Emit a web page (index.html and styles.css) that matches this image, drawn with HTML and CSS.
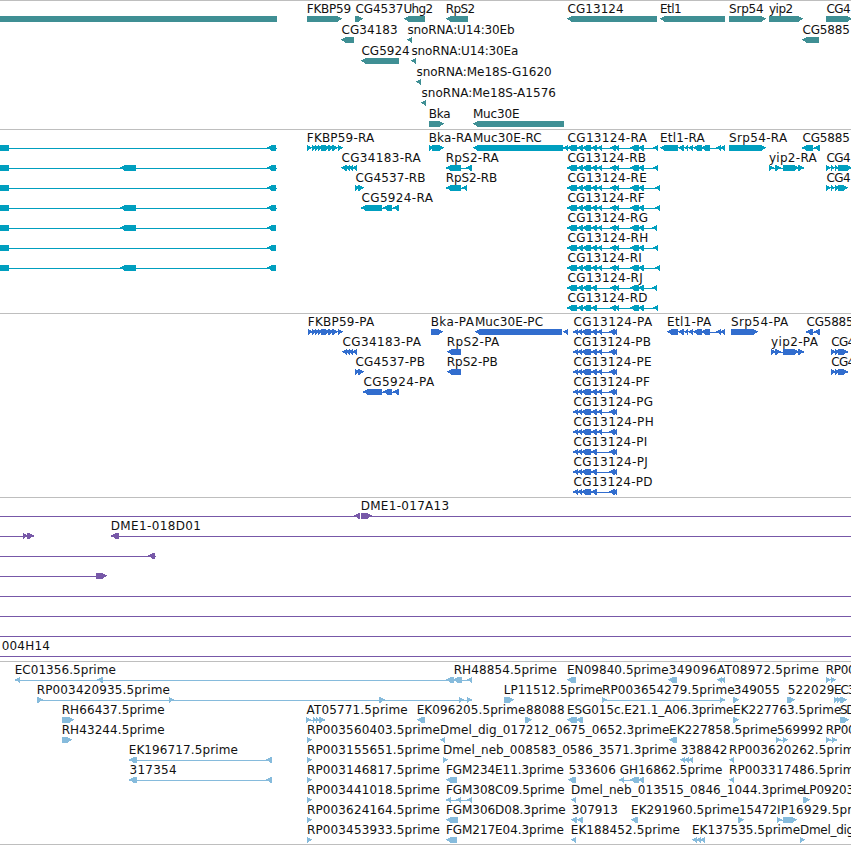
FILE: index.html
```html
<!DOCTYPE html>
<html lang="en">
<head>
<meta charset="utf-8">
<title>Genome map</title>
<link rel="stylesheet" href="styles.css">
</head>
<body>
<main class="map" id="map"></main>
<script src="map.js"></script>
</body>
</html>
```
FILE: styles.css
```css
body {
  margin: 0;
  background: #fff;
  overflow: hidden;
}

.map {
  display: flex;
  flex-direction: column;
  border-bottom: 1px solid #bebebe;
}

.track {
  box-sizing: border-box;
  border-top: 1px solid #bebebe;
  overflow: hidden;
}

.track svg {
  display: block;
}

.label {
  font: 12px "DejaVu Sans", sans-serif;
  fill: #111;
  white-space: pre;
}

.glyph {
  shape-rendering: crispEdges;
}

.genes { height: 129px; fill: #3f8f94; }
.transcripts { height: 184px; fill: #009fbf; }
.proteins { height: 184px; fill: #316dce; }
.clones { height: 164px; fill: #7758a8; }
.ests { height: 183px; fill: #86bbdc; }
```
FILE: map.js
```js
// Each row is [glyphs, labels].
// Glyphs: "<a-b" reverse arrow, ">a-b" forward arrow, "=a-b" box, "_a-b" connecting line.
// Labels: "text|left|right", separated by ";".

const est = id => `RP00${id}.5prime|308|439.5`;

const exonsR = '<567-577 <577-583 <582-591 <591-597';
const tailR = '<610-616 <614-619 <630-639 <638-644';
const rna = (end, single) =>
  `_567-${end} ${exonsR} ${single ? '' : '<597-602'} ${tailR} <${end - 5}-${end}`;
const cds = single =>
  `_573-617 <573-578 <577-582 <581-591 <591-597 ${single ? '' : '<597-602'} <609-615 <612-617`;
const left = (end, mid) => `=0-9 _9-${end} <267-276 ${mid ? '<120-136' : ''}`;
const etl = '<678-684 <684-688 <688-693 <693-702 <701-710 _702-725 <716-721 <720-725';

const tracks = [
  { name: 'genes', pitch: 21, height: 128, rows: [
    ['=0-277 >307-342 >355-363 <404-425 <446-468 <567-657 <660-725 >729-766 >769-803 >826-852',
     'FKBP59|307.8|350.5;CG4537|355.5|402.7;Uhg2|404.5|432.5;RpS2|446.7|474.5;CG13124|567.5|623;Etl1|661|681;Srp54|729|763;yip2|769|792.5;CG4|826.5|850'],
    ['<341-354 <407-412 <802-819', 'CG34183|341.5|397;snoRNA:U14:30Eb|407.5|514;CG5885|802.5|849.3'],
    ['<361-399 <411-416', 'CG5924|361.5|409;snoRNA:U14:30Ea|411.5|518'],
    ['<416-421', 'snoRNA:Me18S-G1620|416.5|551'],
    ['<421-426', 'snoRNA:Me18S-A1576|421.5|555.3'],
    ['>429-444 <473-564', 'Bka|429.7|450.3;Muc30E|473.9|519']
  ]},
  { name: 'transcripts', pitch: 20, height: 183, rows: [
    [`${left(277)} >307-312 >312-317 >315-320 >318-323 >321-330 >328-334 >332-338 >338-343 >429-434 >432-444 <473-563 _563-568 <563-568 ${rna(658)} <660-678 ${etl} >729-766 _802-820 <802-813 <814-820`,
     'FKBP59-RA|307.8|375;Bka-RA|429.7|473;Muc30E-RC|473.9|541.3;CG13124-RA|567.5|647.7;Etl1-RA|661|705.5;Srp54-RA|729|788;CG5885|802.5|849.3'],
    [`${left(277, 1)} <341-347 <345-350 <348-353 <352-357 _446-472 <446-461 <466-472 ${rna(658)} _769-804 >769-774 >775-781 >783-799 >798-804 >826-831 >831-835 >835-839 >838-852`,
     'CG34183-RA|341.5|421.5;RpS2-RA|446.7|499.5;CG13124-RB|567.5|645.7;yip2-RA|769|817.5;CG4|826.5|850'],
    [`${left(277)} >355-360 >358-364 _446-467 <446-461 <462-467 ${rna(660)} >826-831 >831-835 >835-840 >838-848`,
     'CG4537-RB|355.5|425.3;RpS2-RB|446.7|497;CG13124-RE|567.5|646.3;CG4|826.5|850'],
    [`${left(277, 1)} _361-399 <361-382 <383-392 <393-399 ${rna(660)}`, 'CG5924-RA|361.5|433.7;CG13124-RF|567.5|644.7'],
    [`${left(276, 1)} ${rna(657)}`, 'CG13124-RG|567.5|647.7'],
    [`${left(276)} ${rna(658)}`, 'CG13124-RH|567.5|647.3'],
    [`${left(276, 1)} ${rna(660)}`, 'CG13124-RI|567.5|641.3'],
    [rna(657, 1), 'CG13124-RJ|567.5|642.3'],
    [rna(658, 1), 'CG13124-RD|567.5|647.3']
  ]},
  { name: 'proteins', pitch: 20, height: 183, rows: [
    [`>308-313 >312-317 >315-320 >318-323 >321-330 >328-334 >332-338 >338-343 >431-443 <475-562 <563-568 ${cds()} <667-678 ${etl} >731-758 _806-820 <806-813 <814-820`,
     'FKBP59-PA|308.8|374.9;Bka-PA|431.7|474.7;Muc30E-PC|475.9|542.7;CG13124-PA|573.5|653;Etl1-PA|668|712;Srp54-PA|731|789;CG5885|806.5|853'],
    [`<342-347 <345-350 <348-353 <352-357 <447-461 ${cds()} _771-804 >771-776 >775-781 >783-799 >798-804 _831-848 >831-836 >835-840 >838-848`,
     'CG34183-PA|342.5|421.7;RpS2-PA|447.7|500;CG13124-PB|573.5|650.7;yip2-PA|771|818.7;CG4|831.3|854.6'],
    [`>355-360 >358-364 <447-461 ${cds()} _831-848 >831-836 >835-840 >838-848`,
     'CG4537-PB|355.5|424.7;RpS2-PB|447.7|497.5;CG13124-PE|573.5|651;CG4|831.3|854.6'],
    [`_363-399 <363-382 <383-392 <393-399 ${cds()}`, 'CG5924-PA|363.5|435;CG13124-PF|573.5|650'],
    [cds(), 'CG13124-PG|573.5|652.7'],
    [cds(), 'CG13124-PH|573.5|652.7'],
    [cds(1), 'CG13124-PI|573.5|646.7'],
    [cds(1), 'CG13124-PJ|573.5|647.3'],
    [cds(1), 'CG13124-PD|573.5|652.3']
  ]},
  { name: 'clones', pitch: 20, height: 163, rows: [
    ['_0-360 <354-360 >361-372 _361-851', 'DME1-017A13|361.7|448.5'],
    ['_0-34 >23-28 >27-34 <111-119 _111-851', 'DME1-018D01|111.7|200.3'],
    ['_0-156 <148-155', ''],
    ['_0-96 >96-107', ''],
    ['_0-851', ''],
    ['_0-851', ''],
    ['_0-851', ''],
    ['_0-851', '004H14|1.7|49.3']
  ]},
  { name: 'ests', pitch: 20, height: 182, rows: [
    ['_15-472 <15-20 <97-103 <446-454 <453-462 <467-472 <567-576 <668-677 <717-722 <720-725 >826-831 >831-836',
     'EC01356.5prime|15.7|115.5;RH48854.5prime|454.7|556.5;EN09840.5prime|568|668.3;349096|668.7|716;AT08972.5prime|717|818.5;RP00|826.7|855'],
    ['_37-472 >37-43 >169-174 >379-385 >459-464 >467-472 >504-514 _602-725 >602-607 >720-725 >733-739 >787-795 >834-839 >837-842 >840-847',
     'RP003420935.5prime|37.7|169.5;LP11512.5prime|504.7|602.3;RP003654279.5prime|603|734.3;349055|733.7|779.3;522029|787.7|833.7;EC3|835|854.8'],
    ['>62-74 _306-325 >306-311 >313-317 >316-320 >319-325 <417-425 >525-532 <567-577 <576-583 >733-739 >840-849',
     'RH66437.5prime|62.7|164.3;AT05771.5prime|306.5|407.3;EK096205.5prime|417.7|525;88088|526|564;ESG015c.E21.1_A06.3prime|568|733;EK227763.5prime|734|841;SD|840|855.3'],
    ['>62-72 >307-312 <440-445 <669-677 _776-783 >776-781 >783-788 _826-837 >826-831 >832-837',
     `RH43244.5prime|62.7|164.3;${est('3560403')};Dmel_dig_017212_0675_0652.3prime|441|669;EK227858.5prime|670|777;569992|777|822.7;RP00|826.7|855`],
    ['_129-272 <129-137 <266-272 >307-312 >443-448 <680-685 <684-689 <688-693 <729-734',
     `EK196717.5prime|129.7|237.5;${est('3155651')};Dmel_neb_008583_0586_3571.3prime|444|676.3;338842|680.7|726.7;RP003620262.5prime|730|861.5`],
    ['_129-272 <129-137 <266-272 >307-312 <446-457 <568-576 _619-644 <619-624 <630-639 <638-644 <729-734',
     `317354|129.5|176;${est('3146817')};FGM234E11.3prime|446.9|563.5;533606|568.7|615.3;GH16862.5prime|619.7|722;RP003317486.5prime|730|861.5`],
    ['>307-312 _446-472 <446-451 <456-461 <467-472 <571-576 >803-810',
     `${est('3441018')};FGM308C09.5prime|446.9|564.3;Dmel_neb_013515_0846_1044.3prime|572|804;LP09203|803.7|853.5`],
    ['>307-312 <446-458 <571-577 <577-583 <631-638 >738-744 _777-783 >777-782 >783-797',
     `${est('3624164')};FGM306D08.3prime|446.9|565.3;307913|571.7|617.3;EK291960.5prime|632|739;15472|740|776.5;IP16929.5prime|778|875`],
    ['>307-312 <446-457 <571-576 <692-697 <696-701 <700-705 >800-805',
     `${est('3453933')};FGM217E04.3prime|446.9|563.5;EK188452.5prime|571.7|679.5;EK137535.5prime|693|799.7;Dmel_dig|801|853.5`]
  ]}
];

const ctx = document.createElement('canvas').getContext('2d');
ctx.font = '12px "DejaVu Sans"';

// Stepped arrowheads, six pixels tall with the tip on the third pixel row.
function glyph(token, y) {
  const kind = token[0];
  const [a, b] = token.slice(1).split('-').map(Number);
  if (kind === '_') return `<rect x="${a}" y="${y + 3}" width="${b - a}" height="1"/>`;
  if (kind === '=') return `<rect x="${a}" y="${y}" width="${b - a}" height="6"/>`;
  const inset = [4, 2, 0, 1, 3, 4];
  return inset.map((n, i) => {
    const w = Math.max(1, b - a - n);
    return `<rect x="${kind === '<' ? b - w : a}" y="${y + i}" width="${w}" height="1"/>`;
  }).join('');
}

// Spreads the letters so that the label's ink runs from left to right.
function label(entry, y) {
  const [text, l, r] = entry.split('|');
  const m = ctx.measureText(text);
  const ink = m.actualBoundingBoxLeft + m.actualBoundingBoxRight;
  const gap = (r - l - ink) / (text.length - 1);
  const x = Number(l) + m.actualBoundingBoxLeft;
  return `<text class="label" x="${x.toFixed(2)}" y="${y}" letter-spacing="${gap.toFixed(3)}">${text}</text>`;
}

document.getElementById('map').innerHTML = tracks.map(t => {
  const shapes = t.rows.map(([g], i) =>
    g.split(/\s+/).filter(Boolean).map(s => glyph(s, 15 + i * t.pitch)).join('')).join('');
  const labels = t.rows.map(([, s], i) =>
    s.split(';').filter(Boolean).map(e => label(e, 12 + i * t.pitch)).join('')).join('');
  return `<section class="track ${t.name}"><svg width="851" height="${t.height}"><g class="glyph">${shapes}</g>${labels}</svg></section>`;
}).join('');
```
